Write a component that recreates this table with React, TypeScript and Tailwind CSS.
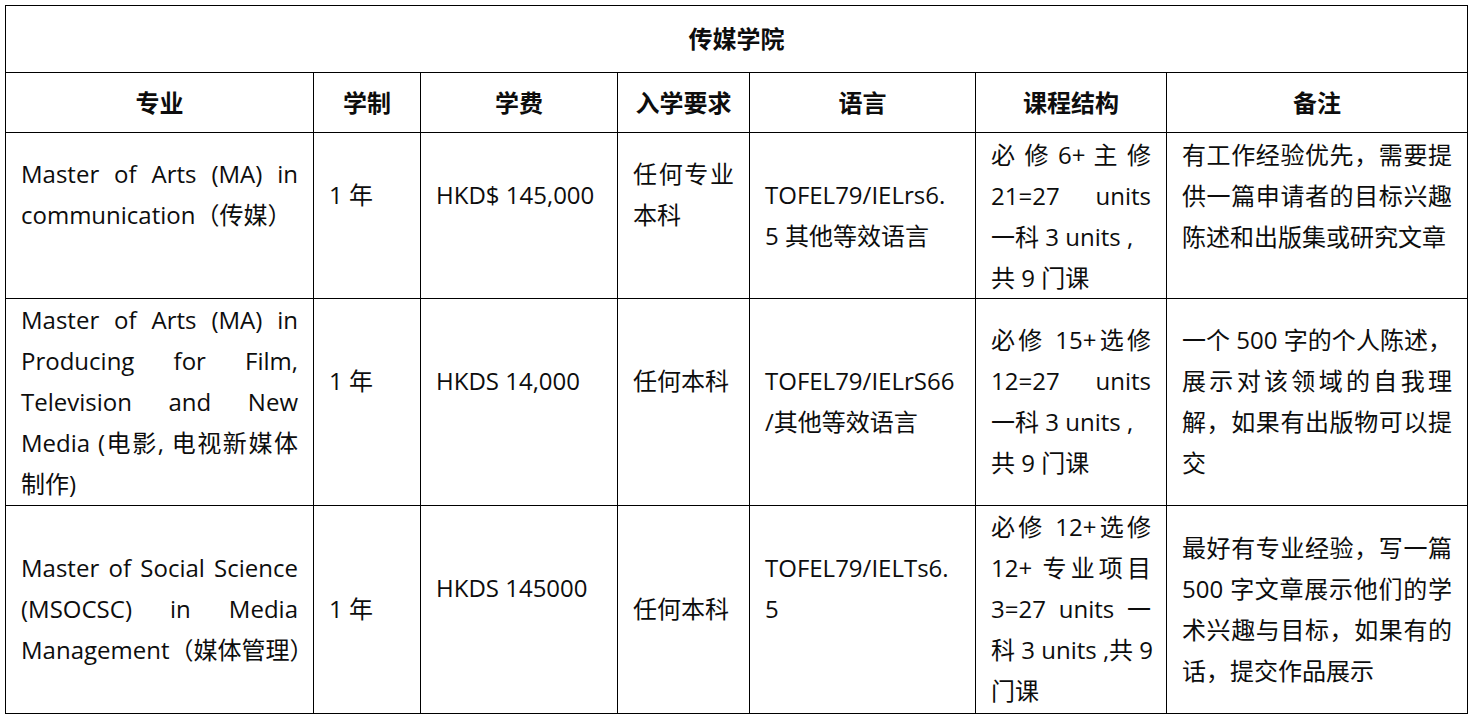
import React from "react";

type L = { t: string; j?: boolean };
type C = { pt: string; lines: L[] };

const J = (t: string): L => ({ t, j: true });
const N = (t: string): L => ({ t });

const heads = ["专业", "学制", "学费", "入学要求", "语言", "课程结构", "备注"];

const rows: { h: string; cells: C[] }[] = [
  {
    h: "h-[166px]",
    cells: [
      { pt: "pt-[20px]", lines: [J("Master of Arts (MA) in"), N("communication（传媒）")] },
      { pt: "pt-[41px]", lines: [N("1 年")] },
      { pt: "pt-[41px]", lines: [N("HKD$ 145,000")] },
      { pt: "pt-[20px]", lines: [J("任何专业"), N("本科")] },
      { pt: "pt-[41px]", lines: [N("TOFEL79/IELrs6."), N("5 其他等效语言")] },
      { pt: "pt-[1px]", lines: [J("必 修 6+ 主 修"), J("21=27 units"), N("一科 3 units ,"), N("共 9 门课")] },
      { pt: "pt-[1px]", lines: [J("有工作经验优先，需要提"), J("供一篇申请者的目标兴趣"), N("陈述和出版集或研究文章")] },
    ],
  },
  {
    h: "h-[207px]",
    cells: [
      {
        pt: "pt-[0px]",
        lines: [J("Master of Arts (MA) in"), J("Producing for Film,"), J("Television and New"), J("Media (电影, 电视新媒体"), N("制作)")],
      },
      { pt: "pt-[61px]", lines: [N("1 年")] },
      { pt: "pt-[61px]", lines: [N("HKDS 14,000")] },
      { pt: "pt-[61px]", lines: [N("任何本科")] },
      { pt: "pt-[61px]", lines: [N("TOFEL79/IELrS66"), N("/其他等效语言")] },
      { pt: "pt-[20px]", lines: [J("必修 15+选修"), J("12=27 units"), N("一科 3 units ,"), N("共 9 门课")] },
      { pt: "pt-[20px]", lines: [J("一个 500 字的个人陈述，"), J("展示对该领域的自我理"), J("解，如果有出版物可以提"), N("交")] },
    ],
  },
  {
    h: "h-[208px]",
    cells: [
      { pt: "pt-[41px]", lines: [J("Master of Social Science"), J("(MSOCSC) in Media"), N("Management（媒体管理）")] },
      { pt: "pt-[82px]", lines: [N("1 年")] },
      { pt: "pt-[61px]", lines: [N("HKDS 145000")] },
      { pt: "pt-[82px]", lines: [N("任何本科")] },
      { pt: "pt-[41px]", lines: [N("TOFEL79/IELTs6."), N("5")] },
      { pt: "pt-[0px]", lines: [J("必修 12+选修"), J("12+ 专业项目"), J("3=27 units 一"), J("科 3 units ,共 9"), N("门课")] },
      { pt: "pt-[21px]", lines: [J("最好有专业经验，写一篇"), J("500 字文章展示他们的学"), J("术兴趣与目标，如果有的"), N("话，提交作品展示")] },
    ],
  },
];

export default function App() {
  return (
    <div className="min-h-[719px] w-[1471px] bg-white p-[5px] text-[#0d0d0d] [font-family:'Open_Sans','Noto_Sans_CJK_SC',sans-serif]">
      <div className="grid w-[1463px] grid-cols-[308px_107px_197px_132px_226px_191px_301px] border-l border-t border-black">
        <div className="col-span-7 flex h-[67px] items-center justify-center border-b border-r border-black text-[24px] font-bold">
          传媒学院
        </div>
        {heads.map((h) => (
          <div
            key={h}
            className="flex h-[60px] items-center justify-center border-b border-r border-black text-[24px] font-bold"
          >
            {h}
          </div>
        ))}
        {rows.map((r, ri) =>
          r.cells.map((c, ci) => (
            <div key={ri + "-" + ci} className={`${r.h} ${c.pt} border-b border-r border-black px-[15px] text-[24px] leading-[41px]`}>
              {c.lines.map((l, li) => (
                <div
                  key={li}
                  className={l.j ? "whitespace-nowrap text-justify [text-align-last:justify]" : "whitespace-nowrap text-left"}
                >
                  {l.t}
                </div>
              ))}
            </div>
          ))
        )}
      </div>
    </div>
  );
}
